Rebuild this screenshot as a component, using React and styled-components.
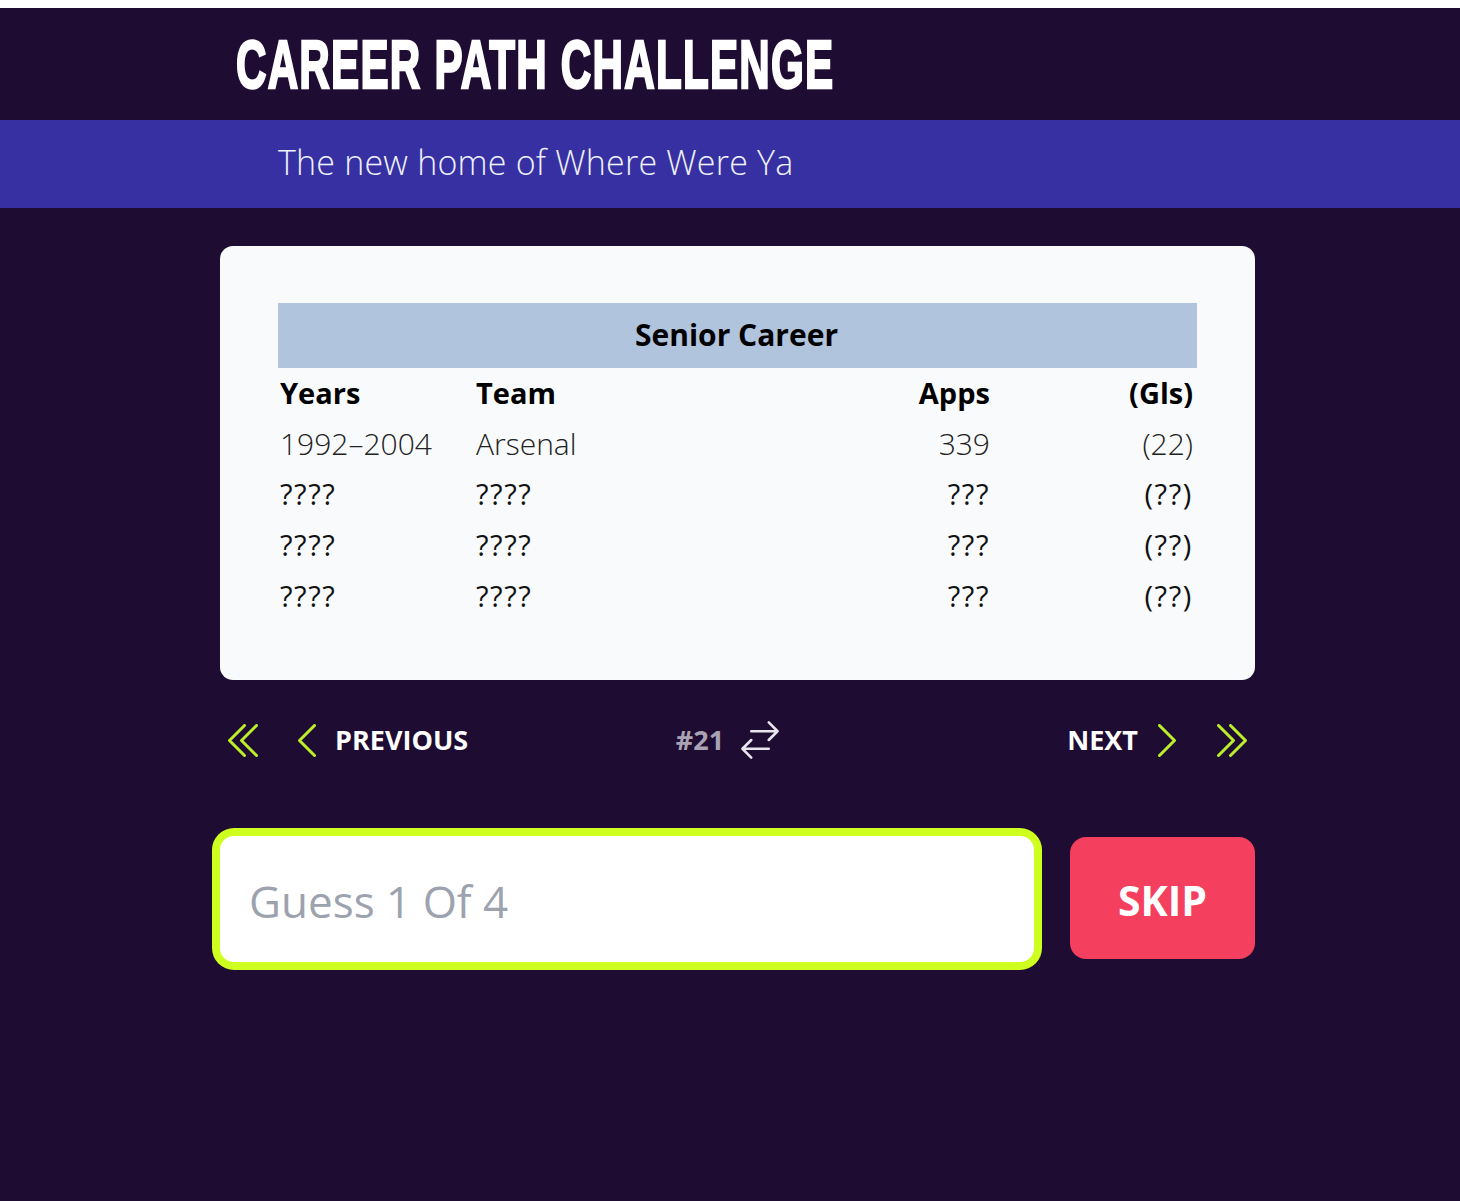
import React from 'react'
import styled, { createGlobalStyle } from 'styled-components'

const GlobalStyle = createGlobalStyle`
  html, body {
    margin: 0;
    padding: 0;
    background: #1e0c32;
  }
  * {
    box-sizing: border-box;
  }
`

const rows = [
  { years: '1992–2004', team: 'Arsenal', apps: '339', gls: '(22)', known: true },
  { years: '????', team: '????', apps: '???', gls: '(??)' },
  { years: '????', team: '????', apps: '???', gls: '(??)' },
  { years: '????', team: '????', apps: '???', gls: '(??)' }
]

const Icon = ({ box, d, color, width, height, stroke = 1.5 }) => (
  <svg
    viewBox={box}
    width={width}
    height={height}
    fill="none"
    stroke={color}
    strokeWidth={stroke}
    strokeLinecap="round"
    strokeLinejoin="round"
  >
    <path d={d} />
  </svg>
)

const LIME = '#bdee2a'

export default function App() {
  return (
    <>
      <GlobalStyle />
      <Page>
        <Header>
          <Title>CAREER PATH CHALLENGE</Title>
        </Header>
        <Banner>
          <Tagline>The new home of Where Were Ya</Tagline>
        </Banner>
        <Main>
          <Card>
            <Table>
              <colgroup>
                <col style={{ width: 196 }} />
                <col style={{ width: 370 }} />
                <col style={{ width: 150 }} />
                <col />
              </colgroup>
              <thead>
                <tr>
                  <Caption colSpan={4}>Senior Career</Caption>
                </tr>
                <tr>
                  <HeadCell>Years</HeadCell>
                  <HeadCell>Team</HeadCell>
                  <HeadCell $right>Apps</HeadCell>
                  <HeadCell $right>(Gls)</HeadCell>
                </tr>
              </thead>
              <tbody>
                {rows.map((row, idx) => (
                  <tr key={idx}>
                    <Cell $known={row.known}>{row.years}</Cell>
                    <Cell $known={row.known}>{row.team}</Cell>
                    <Cell $known={row.known} $right>{row.apps}</Cell>
                    <Cell $known={row.known} $right>{row.gls}</Cell>
                  </tr>
                ))}
              </tbody>
            </Table>
          </Card>

          <Nav>
            <NavGroup>
              <IconButton>
                <Icon
                  box="4.5 3.75 15 16.5"
                  width={30}
                  height={33}
                  color={LIME}
                  d="M18.75 19.5 11.25 12l7.5-7.5m-6 15L5.25 12l7.5-7.5"
                />
              </IconButton>
              <IconButton $gap={40}>
                <Icon
                  box="7.5 3.75 9 16.5"
                  width={18}
                  height={33}
                  color={LIME}
                  d="M15.75 19.5 8.25 12l7.5-7.5"
                />
              </IconButton>
              <NavLabel $gap={19}>PREVIOUS</NavLabel>
            </NavGroup>
            <Counter>
              <CounterText>#21</CounterText>
              <Icon
                box="2.25 2.25 19.5 19.5"
                width={38}
                height={38}
                color="#e8e6ec"
                stroke={1.3}
                d="M7.5 21 3 16.5m0 0L7.5 12M3 16.5h13.5m0-13.5L21 7.5m0 0L16.5 12M21 7.5H7.5"
              />
            </Counter>
            <NavGroup>
              <NavLabel>NEXT</NavLabel>
              <IconButton $gap={20}>
                <Icon
                  box="7.5 3.75 9 16.5"
                  width={18}
                  height={33}
                  color={LIME}
                  d="M8.25 4.5 15.75 12l-7.5 7.5"
                />
              </IconButton>
              <IconButton $gap={41}>
                <Icon
                  box="4.5 3.75 15 16.5"
                  width={30}
                  height={33}
                  color={LIME}
                  d="M5.25 4.5 12.75 12l-7.5 7.5m6-15L18.75 12l-7.5 7.5"
                />
              </IconButton>
            </NavGroup>
          </Nav>

          <GuessRow>
            <GuessInput placeholder="Guess 1 Of 4" />
            <SkipButton>SKIP</SkipButton>
          </GuessRow>
        </Main>
      </Page>
    </>
  )
}

const Page = styled.div`
  min-height: 1201px;
  background: #1e0c32;
  border-top: 8px solid #fff;
  font-family: 'Open Sans', 'Noto Sans', sans-serif;
`

const Header = styled.header`
  height: 112px;
  padding-left: 236px;
  display: flex;
  align-items: center;
`

// no condensed display face is installed, so squeeze the bold one
const Title = styled.h1`
  margin: 0;
  font-family: 'Liberation Sans', sans-serif;
  font-weight: 700;
  font-size: 68px;
  line-height: 1;
  letter-spacing: 2px;
  color: #fff;
  white-space: nowrap;
  -webkit-text-stroke: 2.5px #fff;
  transform: scaleX(0.62);
  transform-origin: left center;
`

const Banner = styled.div`
  height: 88px;
  padding: 0 0 4px 278px;
  background: #3730a3;
  display: flex;
  align-items: center;
`

const Tagline = styled.p`
  margin: 0;
  font-weight: 300;
  font-size: 34px;
  color: #eef0fb;
  letter-spacing: 0.2px;
  white-space: nowrap;
`

const Main = styled.main`
  width: 1035px;
  margin: 38px 0 0 220px;
`

const Card = styled.section`
  height: 434px;
  padding: 57px 58px;
  background: #f8fafc;
  border-radius: 13px;
`

const Table = styled.table`
  width: 919px;
  table-layout: fixed;
  border-collapse: collapse;
  font-size: 29px;
`

const Caption = styled.th`
  height: 65px;
  padding: 0 2px 2px 0;
  background: #b0c4de;
  color: #000;
  font-size: 30px;
  font-weight: 700;
  text-align: center;
`

const HeadCell = styled.th`
  height: 51px;
  padding: 0 4px 2px 2px;
  font-weight: 700;
  color: #000;
  text-align: ${p => (p.$right ? 'right' : 'left')};
`

const Cell = styled.td`
  height: 50.6px;
  padding: 0 4px 2px 2px;
  font-size: ${p => (p.$known ? 30 : 29)}px;
  font-weight: ${p => (p.$known ? 300 : 400)};
  letter-spacing: ${p => (p.$known ? 0 : 1.6)}px;
  color: ${p => (p.$known ? '#222' : '#111')};
  text-align: ${p => (p.$right ? 'right' : 'left')};
`

const Nav = styled.nav`
  height: 120px;
  padding: 0 8px;
  display: flex;
  align-items: center;
  justify-content: space-between;
`

const NavGroup = styled.div`
  width: 240px;
  display: flex;
  align-items: center;
  &:last-child {
    justify-content: flex-end;
  }
`

const IconButton = styled.span`
  display: flex;
  margin-left: ${p => p.$gap || 0}px;
`

const NavLabel = styled.span`
  margin-left: ${p => p.$gap || 0}px;
  padding-bottom: 2px;
  font-size: 27px;
  font-weight: 700;
  letter-spacing: 0;
  color: #fff;
`

const Counter = styled.div`
  display: flex;
  align-items: center;
  gap: 17px;
  margin-right: 20px;
`

const CounterText = styled.span`
  padding-bottom: 2px;
  font-size: 27px;
  font-weight: 700;
  color: #a9a3b3;
`

const GuessRow = styled.div`
  display: flex;
  align-items: flex-start;
  justify-content: space-between;
  margin-top: 36px;
`

const GuessInput = styled.input`
  width: 814px;
  height: 126px;
  padding: 4px 29px 0;
  border: 0;
  outline: 0;
  border-radius: 14px;
  background: #fff;
  box-shadow: 0 0 0 8px #cfff1f;
  font-family: inherit;
  font-size: 44px;
  color: #111;

  &::placeholder {
    color: #9ca3af;
    opacity: 1;
  }
`

const SkipButton = styled.button`
  width: 185px;
  height: 122px;
  margin-top: 1px;
  padding-top: 4px;
  border: 0;
  border-radius: 16px;
  background: #f43f5e;
  color: #fff;
  font-family: inherit;
  font-size: 41px;
  font-weight: 700;
`
